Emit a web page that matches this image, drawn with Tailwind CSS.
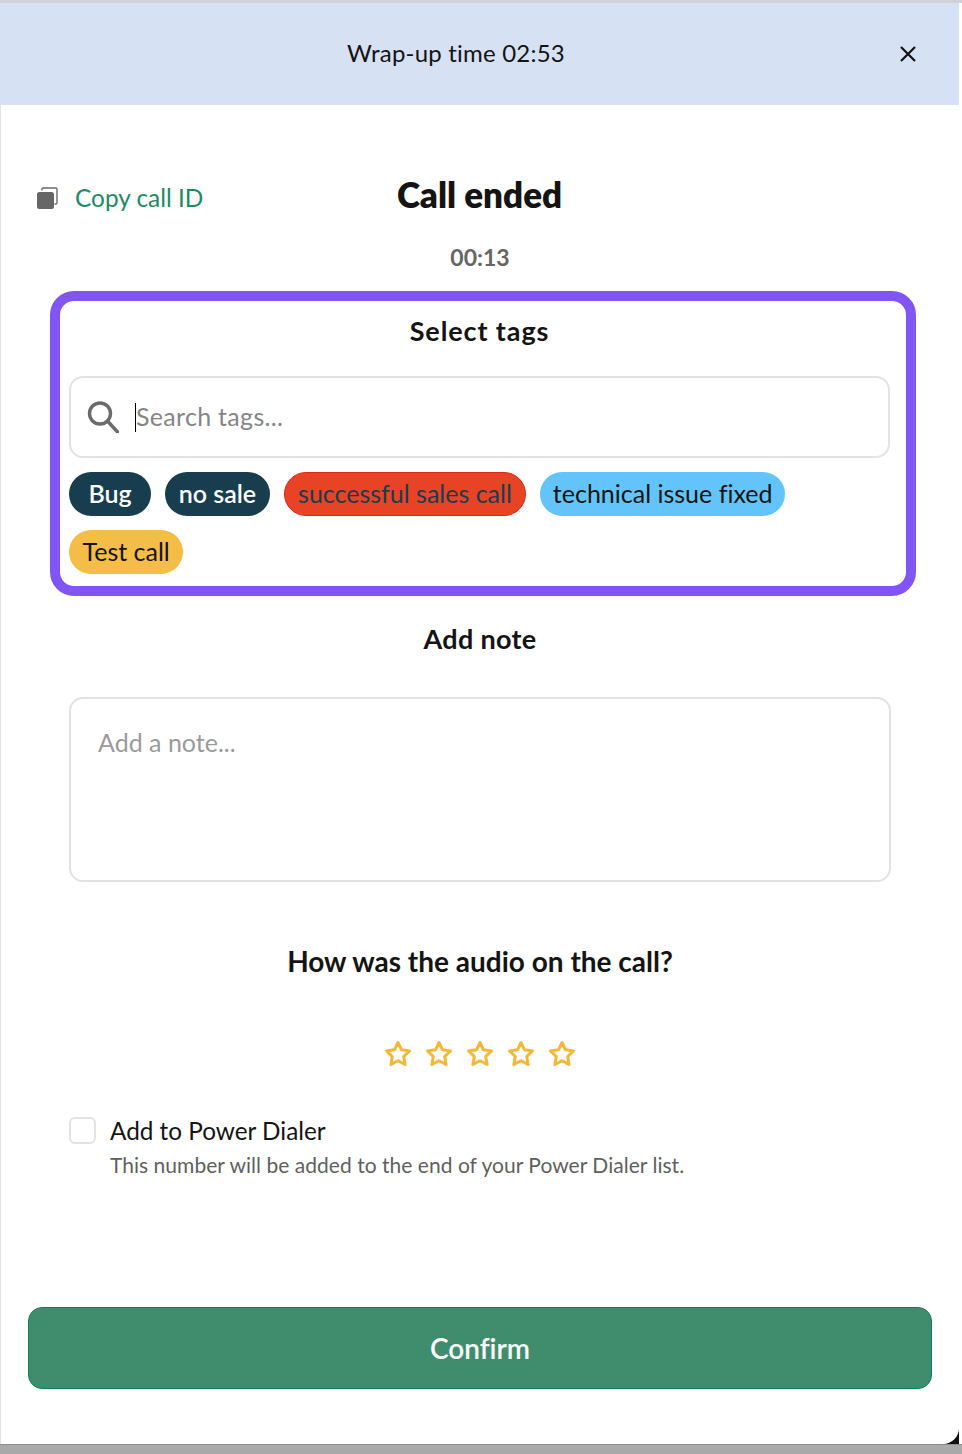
<!DOCTYPE html>
<html lang="en">
<head>
    <meta charset="UTF-8">
    <meta name="viewport" content="width=device-width, initial-scale=1.0">
    <title>Wrap-up</title>
    <script src="https://cdn.jsdelivr.net/npm/@tailwindcss/browser@4"></script>
</head>
<body class="bg-white font-['Lato',sans-serif] [font-variant-ligatures:none] text-[#141414] w-[962px] h-[1454px] overflow-hidden">
    <div class="h-[3px] bg-[#cfd2d8]"></div>

    <div class="w-[959px] h-[1441px] bg-[#111] flex flex-col">
        <div class="flex-1 bg-white rounded-br-[16px] border-l border-[#e4e4e4] flex flex-col">
            <!-- Header -->
            <div class="h-[102px] -ml-px bg-[#d6e1f3] flex items-center shrink-0">
                <div class="flex-1 pl-3 pb-[2px] text-center text-[24px] tracking-[0.2px]">Wrap-up time 02:53</div>
                <svg class="w-4 h-4 mr-[43px]" viewBox="0 0 16 16" fill="none" stroke="#111" stroke-width="2.2">
                    <path d="M1 1l14 14M15 1L1 15" />
                </svg>
            </div>

            <!-- Title row -->
            <div class="grid grid-cols-[1fr_auto_1fr] items-start mt-[69px] h-[41px] -ml-px">
                <div class="flex items-center pl-[37px] pt-[4px] h-[44px]">
                    <svg class="w-[21px] h-[22px]" viewBox="0 0 21 22">
                        <path d="M5 3.5V2.2Q5 1 6.2 1H18.8Q20 1 20 2.2V15.8Q20 17 18.8 17H17.5" fill="none" stroke="#6a6a6a" stroke-width="1.4" />
                        <rect x="0" y="5" width="17" height="17" rx="2.5" fill="#666" />
                    </svg>
                    <span class="ml-[17px] text-[24.4px] text-[#1f8a63]">Copy call ID</span>
                </div>
                <div class="text-[35px] leading-[40px] font-extrabold">Call ended</div>
            </div>
            <div class="mt-[27px] text-center text-[23px] leading-[30px] font-bold text-[#666]">00:13</div>

            <!-- Tags -->
            <div class="ml-[49px] mt-[19px] w-[866px] h-[305px] border-[10px] border-[#8055f3] rounded-[24px] pl-[9px] pr-[16px] shrink-0">
                <div class="mt-[13px] text-center text-[27px] tracking-[0.9px] leading-[34px] font-bold">Select tags</div>
                <div class="mt-[28px] h-[82px] border-2 border-[#e3e3e3] rounded-[14px] flex items-center pl-[16px]">
                    <svg class="w-8 h-8" viewBox="0 0 32 32" fill="none" stroke="#6b6b6b" stroke-width="3.4">
                        <circle cx="13" cy="12.5" r="10.5" />
                        <path d="M20.5 20l10 11" stroke-linecap="round" />
                    </svg>
                    <span class="w-px h-[29px] bg-black ml-[16px]"></span>
                    <span class="text-[25px] tracking-[0.3px] text-[#858585]">Search tags...</span>
                </div>
                <div class="mt-[14px] flex flex-wrap gap-x-[14px] gap-y-[14px] text-[25px] leading-[30px]">
                    <span class="h-[44px] px-[19.5px] pb-[2px] flex items-center rounded-full bg-[#183d4e] text-white font-semibold">Bug</span>
                    <span class="h-[44px] px-[13.5px] pb-[2px] flex items-center rounded-full bg-[#183d4e] text-white font-semibold">no sale</span>
                    <span class="h-[44px] px-[13.5px] pb-[2px] flex items-center rounded-full bg-[#e74324] border border-[#e0261a] text-[#183d4e]">successful sales call</span>
                    <span class="h-[44px] px-[12.5px] pb-[2px] flex items-center rounded-full bg-[#62c4fb]">technical issue fixed</span>
                    <span class="h-[44px] px-[13.5px] pb-[2px] flex items-center rounded-full bg-[#f3bd47]">Test call</span>
                </div>
            </div>

            <!-- Note -->
            <div class="mt-[26px] text-center text-[27px] tracking-[0.3px] leading-[34px] font-bold">Add note</div>
            <div class="ml-[68px] mt-[41px] w-[822px] h-[185px] shrink-0 border-2 border-[#e3e3e3] rounded-[14px] pl-[27px] pt-[27px] text-[25px] leading-[32px] text-[#9a9a9a]">Add a note...</div>

            <!-- Audio rating -->
            <div class="mt-[62px] text-center text-[28px] leading-[34px] font-bold">How was the audio on the call?</div>
            <div class="mt-[62px] flex justify-center gap-[13px]">
                <svg class="w-7 h-7" viewBox="0 0 28 28" fill="none" stroke="#f4b73a" stroke-width="3" stroke-linejoin="round"><path d="M14 2.500l3.500 7.300 8 1.100-5.800 5.600 1.400 8L14 20.700l-7.100 3.800 1.400-8L2.500 10.900l8-1.100z" /></svg>
                <svg class="w-7 h-7" viewBox="0 0 28 28" fill="none" stroke="#f4b73a" stroke-width="3" stroke-linejoin="round"><path d="M14 2.500l3.500 7.300 8 1.100-5.800 5.600 1.400 8L14 20.700l-7.100 3.800 1.400-8L2.500 10.900l8-1.100z" /></svg>
                <svg class="w-7 h-7" viewBox="0 0 28 28" fill="none" stroke="#f4b73a" stroke-width="3" stroke-linejoin="round"><path d="M14 2.500l3.500 7.300 8 1.100-5.800 5.600 1.400 8L14 20.700l-7.100 3.800 1.400-8L2.500 10.900l8-1.100z" /></svg>
                <svg class="w-7 h-7" viewBox="0 0 28 28" fill="none" stroke="#f4b73a" stroke-width="3" stroke-linejoin="round"><path d="M14 2.500l3.500 7.300 8 1.100-5.800 5.600 1.400 8L14 20.700l-7.100 3.800 1.400-8L2.500 10.900l8-1.100z" /></svg>
                <svg class="w-7 h-7" viewBox="0 0 28 28" fill="none" stroke="#f4b73a" stroke-width="3" stroke-linejoin="round"><path d="M14 2.500l3.500 7.300 8 1.100-5.800 5.600 1.400 8L14 20.700l-7.100 3.800 1.400-8L2.500 10.900l8-1.100z" /></svg>
            </div>

            <!-- Power dialer -->
            <div class="ml-[68px] mt-[49px] flex">
                <div class="w-[27px] h-[27px] border-2 border-[#e3e3e3] rounded-[6px] shrink-0"></div>
                <div class="ml-[14px]">
                    <div class="text-[24.3px] leading-[27px]">Add to Power Dialer</div>
                    <div class="mt-[7px] text-[21px] tracking-[0.03px] leading-[28px] text-[#5f5f5f]">This number will be added to the end of your Power Dialer list.</div>
                </div>
            </div>

            <button class="ml-[27px] mt-[128px] w-[904px] h-[82px] shrink-0 bg-[#3f8d6d] border border-[#0f7f5c] rounded-[14px] text-white text-[28px] font-semibold">Confirm</button>
        </div>
    </div>

    <div class="h-[10px] bg-[#a9a9a9] border-t border-[#8c8c8c]"></div>
</body>
</html>
